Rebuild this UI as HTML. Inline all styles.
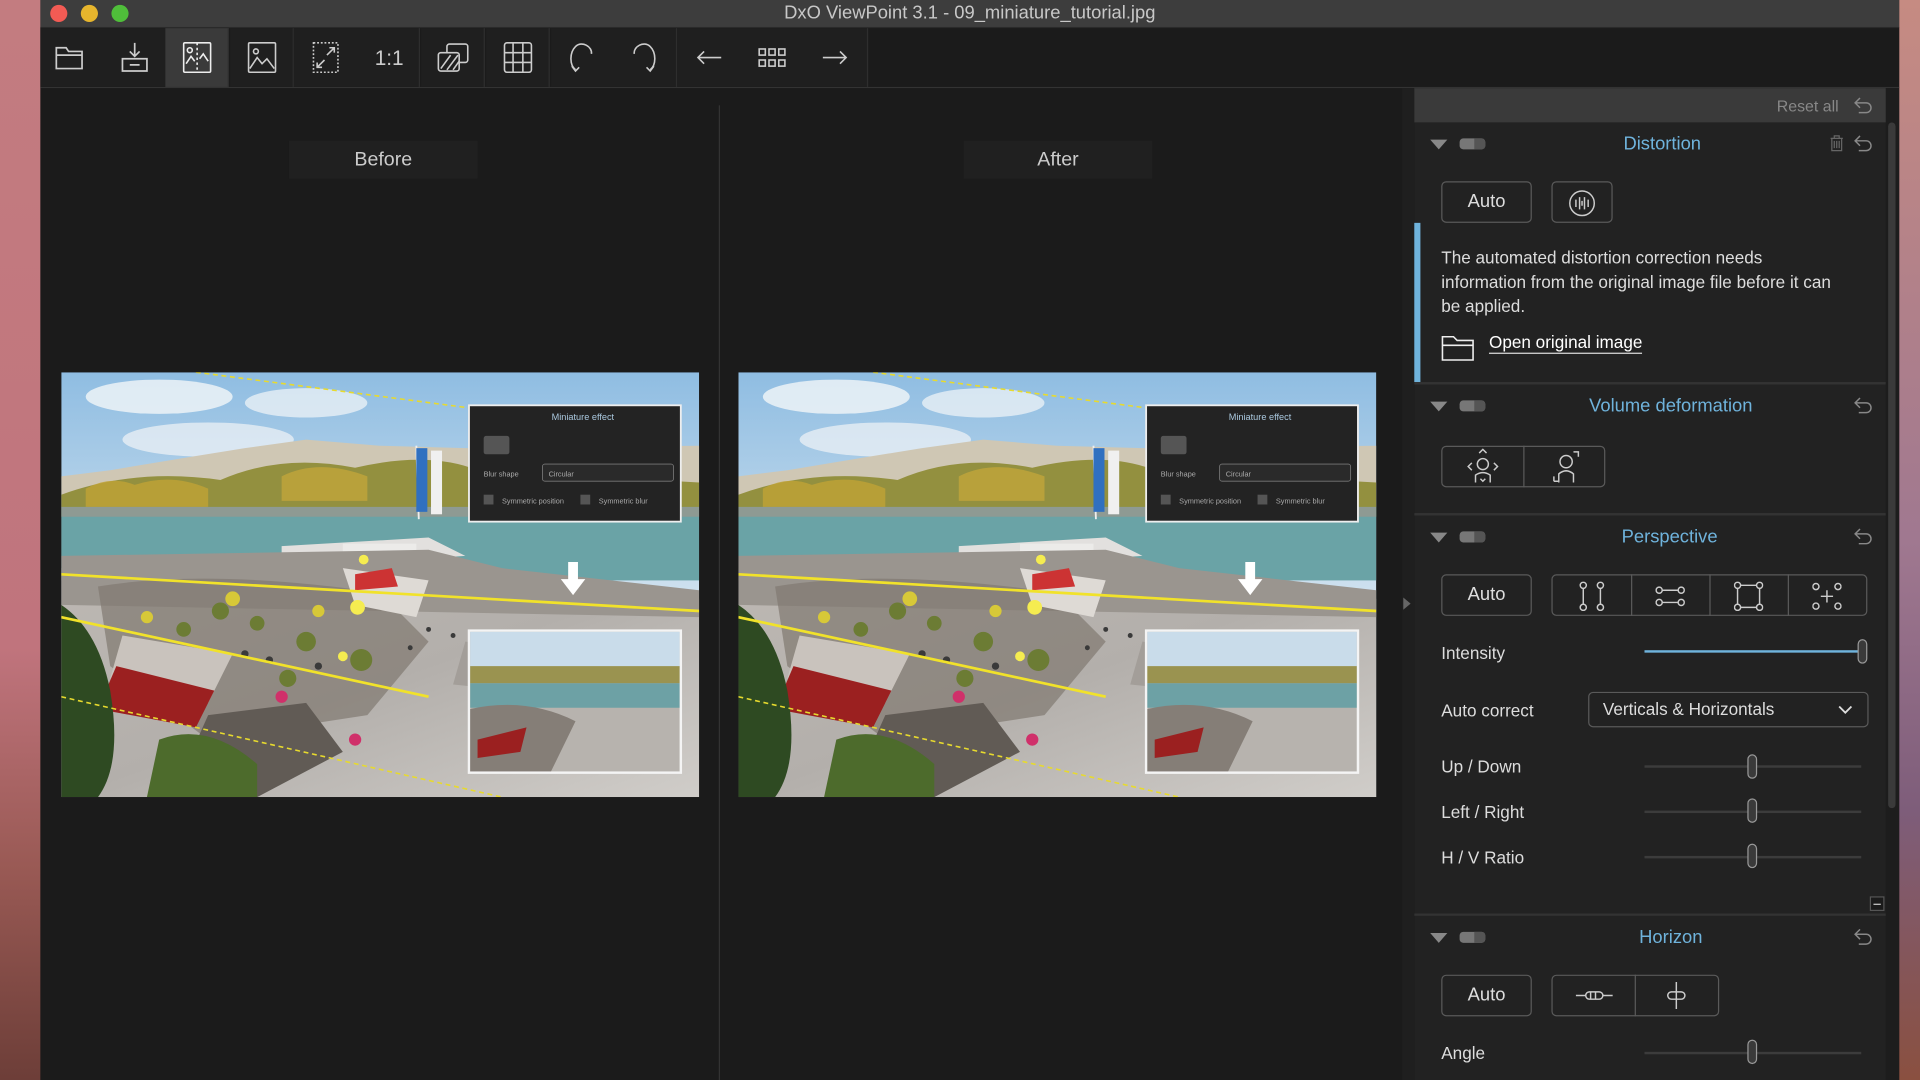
<!DOCTYPE html>
<html><head><meta charset="utf-8"><style>
*{margin:0;padding:0;box-sizing:border-box}
html,body{width:1920px;height:1080px;overflow:hidden;background:#1b1b1b}
#w{position:absolute;left:0;top:0;width:1568px;height:882px;transform:scale(1.22449);transform-origin:0 0;font-family:"Liberation Sans",sans-serif;color:#ddd}
.abs{position:absolute}
.tb{position:absolute;top:23px;height:48px;background:#1f1f1f;border-right:1px solid #2e2e2e}
.tb svg{position:absolute;left:50%;top:50%;transform:translate(-50%,-50%)}
.ph{position:absolute;top:304px;width:521px;height:347px;overflow:hidden}
.sec{position:absolute;left:1155px;width:385px;background:#222}
.ttl{position:absolute;color:#6fb3dc;font-size:15px;text-align:center;width:385px;left:0}
.tri{position:absolute;left:13px;width:0;height:0;border-left:7px solid transparent;border-right:7px solid transparent;border-top:8px solid #888}
.tog{position:absolute;left:37px;width:21px;height:9px;border-radius:3px;background:#777}
.tog:after{content:"";position:absolute;right:0;top:0;width:9px;height:9px;background:#555;border-radius:0 3px 3px 0}
.btn{position:absolute;border:1px solid #5a5a5a;border-radius:4px;font-size:15px;color:#ddd;text-align:center}
.lbl{position:absolute;left:22px;font-size:14px;color:#ddd}
.trk{position:absolute;left:188px;width:177px;height:2px;background:#3c3c3c}
.knob{position:absolute;width:8px;height:20px;border:1.5px solid #999;border-radius:4px;background:#3a3a3a}
.und{position:absolute;right:10px}
</style></head><body><div id="w">
<div class="abs" style="left:0;top:0;width:33px;height:882px;background:linear-gradient(#c37c80,#c0747d 60%,#9a5a55 80%,#6d3e38)"></div>
<div class="abs" style="left:1551px;top:0;width:17px;height:882px;background:linear-gradient(#c68b82,#a07890 50%,#7e5d7a 75%,#8a5040)"></div>
<div class="abs" style="left:33px;top:0;width:1518px;height:23px;background:#3d3d3d;border-bottom:1px solid #2a2a2a"></div>
<div class="abs" style="left:41px;top:4px;width:14px;height:14px;border-radius:50%;background:#f25b54"></div>
<div class="abs" style="left:66px;top:4px;width:14px;height:14px;border-radius:50%;background:#e6b52d"></div>
<div class="abs" style="left:91px;top:4px;width:14px;height:14px;border-radius:50%;background:#4fbe3a"></div>
<div class="abs" style="left:33px;top:2px;width:1518px;text-align:center;font-size:15px;color:#c8c8c8">DxO ViewPoint 3.1 - 09_miniature_tutorial.jpg</div>
<div class="abs" style="left:33px;top:23px;width:1518px;height:49px;background:#1b1b1b;border-bottom:1px solid #333"></div>
<div class="tb" style="left:33px;width:102px;border-right:none"><svg style="left:24px" width="26" height="22" viewBox="0 0 26 22" fill="none" stroke="#ccc" stroke-width="1.4"><path d="M2 3h8l2 3h11v14H2z M2 9h21"/></svg><svg style="left:77px" width="24" height="26" viewBox="0 0 24 26" fill="none" stroke="#ccc" stroke-width="1.4"><path d="M12 1v11M8 8l4 4 4-4M2 14h20v10H2z M8 19h8"/></svg></div>
<div class="tb" style="left:135px;width:52px;background:#3a3a3a"><svg width="24" height="26" viewBox="0 0 24 26" fill="none" stroke="#eee" stroke-width="1.3"><rect x="1" y="1" width="22" height="24" rx="1"/><path d="M12 1v24" stroke-dasharray="2 2"/><circle cx="6" cy="7" r="2"/><path d="M3 18l4-6 3 4M14 14l3-4 4 6"/></svg></div>
<div class="tb" style="left:188px;width:52px"><svg width="24" height="26" viewBox="0 0 24 26" fill="none" stroke="#ccc" stroke-width="1.3"><rect x="1" y="1" width="22" height="24" rx="1"/><circle cx="7" cy="8" r="2"/><path d="M2 22l6-9 4 5 4-4 6 8"/></svg></div>
<div class="tb" style="left:240px;width:103px"><svg style="left:26px" width="22" height="26" viewBox="0 0 22 26" fill="none" stroke="#ccc" stroke-width="1.3"><rect x="1" y="1" width="20" height="24" stroke-dasharray="1.5 1.5"/><path d="M12 11l6-6M14 5h4v4M10 15l-6 6M4 17v4h4"/></svg><div class="abs" style="left:66px;top:15px;font-size:17px;color:#ccc">1:1</div></div>
<div class="tb" style="left:344px;width:52px"><svg width="26" height="24" viewBox="0 0 26 24" fill="none" stroke="#ccc" stroke-width="1.3"><rect x="8" y="1" width="17" height="15" rx="2"/><rect x="1" y="8" width="17" height="15" rx="2" fill="#1f1f1f"/><path d="M3 21l8-11M8 22l9-12M13 22l5-7"/></svg></div>
<div class="tb" style="left:397px;width:52px"><svg width="24" height="26" viewBox="0 0 24 26" fill="none" stroke="#ccc" stroke-width="1.3"><rect x="1" y="1" width="22" height="24" rx="2"/><path d="M8 1v24M16 1v24M1 9h22M1 17h22"/></svg></div>
<div class="tb" style="left:450px;width:103px"><svg style="left:25px" width="22" height="28" viewBox="0 0 22 28" fill="none" stroke="#ccc" stroke-width="1.3"><path d="M6 24C1 20 1 10 6 5c5-5 14 0 13 6"/><path d="M3 21l3 4 3-3"/></svg><svg style="left:76px" width="22" height="28" viewBox="0 0 22 28" fill="none" stroke="#ccc" stroke-width="1.3"><path d="M16 24c5-4 5-14 0-19-5-5-14 0-13 6"/><path d="M19 21l-3 4-3-3"/></svg></div>
<div class="tb" style="left:553px;width:156px"><svg style="left:26px" width="22" height="12" viewBox="0 0 22 12" fill="none" stroke="#ccc" stroke-width="1.3"><path d="M21 6H2M7 1L2 6l5 5"/></svg><svg style="left:78px" width="24" height="16" viewBox="0 0 24 16" fill="none" stroke="#ccc" stroke-width="1.3"><rect x="1" y="1" width="5" height="5"/><rect x="9" y="1" width="5" height="5"/><rect x="17" y="1" width="5" height="5"/><rect x="1" y="10" width="5" height="5"/><rect x="9" y="10" width="5" height="5"/><rect x="17" y="10" width="5" height="5"/></svg><svg style="left:129px" width="22" height="12" viewBox="0 0 22 12" fill="none" stroke="#ccc" stroke-width="1.3"><path d="M1 6h19M15 1l5 5-5 5"/></svg></div>
<div class="abs" style="left:33px;top:72px;width:1112px;height:810px;background:#1b1b1b"></div>
<div class="abs" style="left:587px;top:86px;width:1px;height:796px;background:#333"></div>
<div class="abs" style="left:236px;top:115px;width:154px;height:31px;background:#202020;text-align:center;font-size:16px;line-height:31px;color:#ccc">Before</div>
<div class="abs" style="left:787px;top:115px;width:154px;height:31px;background:#202020;text-align:center;font-size:16px;line-height:31px;color:#ccc">After</div>
<div class="abs" style="left:1145px;top:72px;width:10px;height:810px;background:#1f1f1f"></div>
<div class="abs" style="left:1146px;top:488px;border-top:5px solid transparent;border-bottom:5px solid transparent;border-left:6px solid #666"></div>

<div class="ph" style="left:50px" id="p1">
<svg width="521" height="347" viewBox="0 0 521 347">
<defs><linearGradient id="sk" x1="0" y1="0" x2="0" y2="1"><stop offset="0" stop-color="#8fbde2"/><stop offset=".6" stop-color="#d8e6f0"/><stop offset="1" stop-color="#eef1f2"/></linearGradient>
<linearGradient id="gr" x1="0" y1="0" x2="1" y2="1"><stop offset="0" stop-color="#bdb8b3"/><stop offset=".5" stop-color="#b3afab"/><stop offset="1" stop-color="#d0cdc9"/></linearGradient></defs>
<rect width="521" height="347" fill="url(#sk)"/>
<ellipse cx="80" cy="20" rx="60" ry="14" fill="#f3f6f8" opacity=".8"/><ellipse cx="200" cy="25" rx="50" ry="12" fill="#f3f6f8" opacity=".7"/><ellipse cx="120" cy="55" rx="70" ry="14" fill="#f1f4f6" opacity=".7"/>
<path d="M0 85 L40 80 L100 70 L150 62 L200 55 L260 60 L330 62 L521 60 L521 110 L0 110Z" fill="#cfc7b4"/>
<path d="M0 100 Q60 78 130 88 Q180 66 240 78 Q300 64 340 80 L521 90 L521 118 L0 118Z" fill="#93903f"/>
<path d="M20 95 Q40 84 60 92 Q90 82 120 95 L120 110 L20 110Z" fill="#c0a336" opacity=".8"/>
<path d="M180 85 Q210 70 250 85 L250 105 L180 105Z" fill="#c8a83a" opacity=".7"/>
<rect x="0" y="110" width="521" height="60" fill="#6aa3a6"/>
<rect x="0" y="110" width="521" height="8" fill="#8e9a93"/>
<path d="M180 142 L300 135 L330 150 L180 160Z" fill="#e2e0de"/>
<rect x="230" y="140" width="60" height="16" fill="#ecebe9"/>
<path d="M0 160 L521 185 L521 347 L0 347Z" fill="url(#gr)"/>
<path d="M0 150 L300 145 L360 160 L521 178 L521 200 L0 190Z" fill="#9a958f"/>
<path d="M30 175 Q120 160 260 180 L300 220 L250 280 L120 300 L40 240Z" fill="#807971" opacity=".7"/>
<g fill="#6c7c34"><circle cx="130" cy="195" r="7"/><circle cx="160" cy="205" r="6"/><circle cx="200" cy="220" r="8"/><circle cx="245" cy="235" r="9"/><circle cx="100" cy="210" r="6"/><circle cx="185" cy="250" r="7"/></g>
<g fill="#d7c838"><circle cx="140" cy="185" r="6"/><circle cx="210" cy="195" r="5"/><circle cx="70" cy="200" r="5"/></g>
<g fill="#3a3a3a"><circle cx="150" cy="230" r="3"/><circle cx="170" cy="235" r="3"/><circle cx="210" cy="240" r="3"/><circle cx="300" cy="210" r="2"/><circle cx="320" cy="215" r="2"/><circle cx="285" cy="225" r="2"/></g>
<path d="M230 160 L300 170 L290 200 L240 190Z" fill="#dedad5"/><path d="M240 165 L270 160 L275 175 L240 178Z" fill="#c33"/>
<path d="M50 215 L140 230 L120 270 L40 250Z" fill="#c9c3bd"/><path d="M45 240 L125 260 L110 290 L30 275Z" fill="#9b2020"/>
<path d="M0 190 Q30 210 40 260 Q50 320 30 347 L0 347Z" fill="#2e4a22"/>
<path d="M120 280 L200 270 L230 310 L160 347 L90 347Z" fill="#615b55"/>
<path d="M330 220 L380 225 L370 260 L320 255Z" fill="#a39e99"/>
<circle cx="180" cy="265" r="5" fill="#d0306a"/><circle cx="240" cy="300" r="5" fill="#d0306a"/>
<path d="M80 300 Q120 285 160 320 L160 347 L70 347Z" fill="#4d6b2c"/>
<path d="M290 60 L292 120" stroke="#eee" stroke-width="1.5"/><rect x="290" y="62" width="9" height="52" fill="#3070c0"/><rect x="302" y="64" width="9" height="52" fill="#f0f0f0"/>
<line x1="0" y1="165" x2="521" y2="195" stroke="#f1e22a" stroke-width="2.2"/>
<line x1="0" y1="200" x2="300" y2="265" stroke="#f1e22a" stroke-width="2.2"/>
<line x1="110" y1="0" x2="340" y2="30" stroke="#e7da2e" stroke-width="1.3" stroke-dasharray="4 3"/>
<line x1="0" y1="265" x2="360" y2="347" stroke="#e7da2e" stroke-width="1.3" stroke-dasharray="4 3"/>
<circle cx="247" cy="153" r="4" fill="#f5ec50"/><circle cx="242" cy="192" r="6" fill="#f5ec50"/><circle cx="230" cy="232" r="4" fill="#f5ec50"/>
<path d="M414 155h8v14h6l-10 13-10-13h6z" fill="#fff"/>
<rect x="333" y="27" width="173" height="95" fill="#232323" stroke="#eee" stroke-width="1.5"/>
<text x="426" y="39" fill="#aac8de" font-size="7.5" text-anchor="middle" font-family="Liberation Sans">Miniature effect</text>
<rect x="345" y="52" width="21" height="15" rx="2" fill="#555"/>
<text x="345" y="85" fill="#aaa" font-size="6" font-family="Liberation Sans">Blur shape</text>
<rect x="393" y="75" width="107" height="14" rx="2" fill="#2a2a2a" stroke="#777" stroke-width=".7"/>
<text x="398" y="85" fill="#aaa" font-size="6" font-family="Liberation Sans">Circular</text>
<rect x="345" y="100" width="8" height="8" fill="#555"/><text x="360" y="107" fill="#aaa" font-size="6" font-family="Liberation Sans">Symmetric position</text>
<rect x="424" y="100" width="8" height="8" fill="#555"/><text x="439" y="107" fill="#aaa" font-size="6" font-family="Liberation Sans">Symmetric blur</text>
<rect x="333" y="211" width="173" height="116" fill="#b7b3ae" stroke="#f4f4f4" stroke-width="2"/>
<rect x="334" y="212" width="171" height="30" fill="#c9dcea"/><rect x="334" y="240" width="171" height="14" fill="#9a9350"/><rect x="334" y="254" width="171" height="20" fill="#6da1a5"/>
<path d="M334 275 Q380 265 420 285 L400 326 L334 326Z" fill="#857e77"/><path d="M340 300 L380 290 L375 310 L340 315Z" fill="#9b2020"/>
</svg></div>
<div class="ph" style="left:603px" id="p2"></div>
<script>document.getElementById('p2').innerHTML=document.getElementById('p1').innerHTML;</script>

<div class="abs" style="left:1155px;top:72px;width:396px;height:810px;background:#1d1d1d"></div>
<div class="abs" style="left:1155px;top:72px;width:385px;height:28px;background:#3a3a3a"></div>
<div class="abs" style="left:1451px;top:79px;font-size:13px;color:#888">Reset all</div>
<svg class="abs" style="left:1514px;top:79px" width="16" height="14" viewBox="0 0 16 14" fill="none" stroke="#888" stroke-width="1.2"><path d="M5 1L1 5l4 4M1 5h9a4 4 0 010 8H4"/></svg>
<div class="abs" style="left:1542px;top:100px;width:6px;height:560px;background:#3a3a3a;border-radius:3px"></div>

<div class="sec" style="top:100px;height:212px">
<div class="tri" style="top:14px"></div><div class="tog" style="top:13px"></div>
<div class="ttl" style="top:9px;left:10px">Distortion</div>
<svg class="abs" style="left:339px;top:10px" width="12" height="14" viewBox="0 0 12 14" fill="none" stroke="#666" stroke-width="1"><path d="M1 3h10M4 3V1h4v2M2 3v10h8V3M4 5v6M6 5v6M8 5v6"/></svg>
<svg class="und" style="top:10px" width="16" height="14" viewBox="0 0 16 14" fill="none" stroke="#888" stroke-width="1.2"><path d="M5 1L1 5l4 4M1 5h9a4 4 0 010 8H4"/></svg>
<div class="btn" style="left:22px;top:48px;width:74px;height:34px;line-height:32px">Auto</div>
<div class="btn" style="left:112px;top:48px;width:50px;height:34px"><svg style="margin-top:6px" width="22" height="22" viewBox="0 0 22 22" fill="none" stroke="#ccc" stroke-width="1.2"><circle cx="11" cy="11" r="10"/><path d="M6 8v6M9 6v10M11 9v4M13 6v10M16 8v6"/></svg></div>
<div class="abs" style="left:0;top:82px;width:5px;height:130px;background:#6fb3dc"></div>
<div class="abs" style="left:22px;top:100px;width:370px;font-size:14px;line-height:20px;color:#ddd;white-space:nowrap">The automated distortion correction needs<br>information from the original image file before it can<br>be applied.</div>
<svg class="abs" style="left:22px;top:173px" width="28" height="22" viewBox="0 0 28 22" fill="none" stroke="#eee" stroke-width="1.3"><path d="M1 2h9l3 3h13v16H1z M1 9h25"/></svg>
<div class="abs" style="left:61px;top:171px;font-size:14px;color:#fff;border-bottom:1.5px solid #ddd;padding-bottom:1px">Open original image</div>
</div>
<div class="abs" style="left:1155px;top:312px;width:385px;height:2px;background:#333"></div>
<div class="sec" style="top:314px;height:105px">
<div class="tri" style="top:14px"></div><div class="tog" style="top:13px"></div>
<div class="ttl" style="top:9px;left:17px">Volume deformation</div>
<svg class="und" style="top:10px" width="16" height="14" viewBox="0 0 16 14" fill="none" stroke="#888" stroke-width="1.2"><path d="M5 1L1 5l4 4M1 5h9a4 4 0 010 8H4"/></svg>
<div class="btn" style="left:22px;top:50px;width:134px;height:34px"></div>
<div class="abs" style="left:89px;top:50px;width:1px;height:34px;background:#5a5a5a"></div>
<svg class="abs" style="left:42px;top:52px" width="28" height="30" viewBox="0 0 28 30" fill="none" stroke="#ccc" stroke-width="1.2"><circle cx="14" cy="13" r="4.5"/><path d="M8 28v-6q6-4 12 0v6M11 4l3-3 3 3M5 12l-3 3 3 3M23 12l3 3-3 3M12 25l2 2 2-2"/></svg>
<svg class="abs" style="left:110px;top:52px" width="28" height="30" viewBox="0 0 28 30" fill="none" stroke="#ccc" stroke-width="1.2"><circle cx="14" cy="11" r="5"/><path d="M8 28v-7q6-5 12 0v7M20 3h4v4M4 27v-4M4 27h4"/></svg>
</div>
<div class="abs" style="left:1155px;top:419px;width:385px;height:2px;background:#333"></div>
<div class="sec" style="top:421px;height:325px">
<div class="tri" style="top:14px"></div><div class="tog" style="top:13px"></div>
<div class="ttl" style="top:9px;left:16px">Perspective</div>
<svg class="und" style="top:10px" width="16" height="14" viewBox="0 0 16 14" fill="none" stroke="#888" stroke-width="1.2"><path d="M5 1L1 5l4 4M1 5h9a4 4 0 010 8H4"/></svg>
<div class="btn" style="left:22px;top:48px;width:74px;height:34px;line-height:32px">Auto</div>
<div class="btn" style="left:112px;top:48px;width:258px;height:34px"></div>
<div class="abs" style="left:177px;top:48px;width:1px;height:34px;background:#5a5a5a"></div>
<div class="abs" style="left:241px;top:48px;width:1px;height:34px;background:#5a5a5a"></div>
<div class="abs" style="left:305px;top:48px;width:1px;height:34px;background:#5a5a5a"></div>
<svg class="abs" style="left:133px;top:54px" width="24" height="24" viewBox="0 0 24 24" fill="none" stroke="#ccc" stroke-width="1.2"><circle cx="5" cy="3" r="2.5"/><circle cx="5" cy="21" r="2.5"/><circle cx="19" cy="3" r="2.5"/><circle cx="19" cy="21" r="2.5"/><path d="M5 5.5v13M19 5.5v13"/></svg>
<svg class="abs" style="left:197px;top:54px" width="24" height="24" viewBox="0 0 24 24" fill="none" stroke="#ccc" stroke-width="1.2"><circle cx="3" cy="7" r="2.5"/><circle cx="21" cy="7" r="2.5"/><circle cx="3" cy="17" r="2.5"/><circle cx="21" cy="17" r="2.5"/><path d="M5.5 7h13M5.5 17h13"/></svg>
<svg class="abs" style="left:261px;top:54px" width="24" height="24" viewBox="0 0 24 24" fill="none" stroke="#ccc" stroke-width="1.2"><circle cx="3" cy="3" r="2.5"/><circle cx="21" cy="3" r="2.5"/><circle cx="3" cy="21" r="2.5"/><circle cx="21" cy="21" r="2.5"/><path d="M5.5 3h13M5.5 21h13M3 5.5v13M21 5.5v13"/></svg>
<svg class="abs" style="left:325px;top:54px" width="24" height="24" viewBox="0 0 24 24" fill="none" stroke="#ccc" stroke-width="1.2"><circle cx="3" cy="4" r="2.5"/><circle cx="21" cy="4" r="2.5"/><circle cx="3" cy="20" r="2.5"/><circle cx="21" cy="20" r="2.5"/><path d="M12 7v10M7 12h10"/></svg>
<div class="lbl" style="top:104px">Intensity</div>
<div class="abs" style="left:188px;top:110px;width:178px;height:2px;background:#6fb3dc"></div>
<div class="knob" style="left:362px;top:101px"></div>
<div class="lbl" style="top:151px">Auto correct</div>
<div class="btn" style="left:142px;top:144px;width:229px;height:29px;line-height:27px;text-align:left;padding-left:11px;font-size:14px">Verticals &amp; Horizontals<svg style="position:absolute;right:12px;top:10px" width="12" height="8" viewBox="0 0 12 8" fill="none" stroke="#ddd" stroke-width="1.5"><path d="M1 1l5 5 5-5"/></svg></div>
<div class="lbl" style="top:197px">Up / Down</div><div class="trk" style="top:204px"></div><div class="knob" style="left:272px;top:195px"></div>
<div class="lbl" style="top:234px">Left / Right</div><div class="trk" style="top:241px"></div><div class="knob" style="left:272px;top:231px"></div>
<div class="lbl" style="top:271px">H / V Ratio</div><div class="trk" style="top:278px"></div><div class="knob" style="left:272px;top:268px"></div>
<div class="abs" style="left:372px;top:311px;width:12px;height:12px;border:1px solid #555;background:#1b1b1b"><div style="margin:5px 2px;height:1px;background:#ccc"></div></div>
</div>
<div class="abs" style="left:1155px;top:746px;width:385px;height:2px;background:#333"></div>
<div class="sec" style="top:748px;height:134px">
<div class="tri" style="top:14px"></div><div class="tog" style="top:13px"></div>
<div class="ttl" style="top:9px;left:17px">Horizon</div>
<svg class="und" style="top:10px" width="16" height="14" viewBox="0 0 16 14" fill="none" stroke="#888" stroke-width="1.2"><path d="M5 1L1 5l4 4M1 5h9a4 4 0 010 8H4"/></svg>
<div class="btn" style="left:22px;top:48px;width:74px;height:34px;line-height:32px">Auto</div>
<div class="btn" style="left:112px;top:48px;width:137px;height:34px"></div>
<div class="abs" style="left:180px;top:48px;width:1px;height:34px;background:#5a5a5a"></div>
<svg class="abs" style="left:131px;top:58px" width="32" height="14" viewBox="0 0 32 14" fill="none" stroke="#ccc" stroke-width="1.2"><path d="M1 7h8M23 7h8"/><rect x="9" y="4" width="14" height="6" rx="3"/><path d="M13 4v6M17 4v6"/></svg>
<svg class="abs" style="left:206px;top:53px" width="16" height="24" viewBox="0 0 16 24" fill="none" stroke="#ccc" stroke-width="1.2"><path d="M8 1v22"/><rect x="1" y="9" width="14" height="6" rx="3"/></svg>
<div class="lbl" style="top:104px">Angle</div><div class="trk" style="top:111px"></div><div class="knob" style="left:272px;top:101px"></div>
</div>
</div></body></html>
